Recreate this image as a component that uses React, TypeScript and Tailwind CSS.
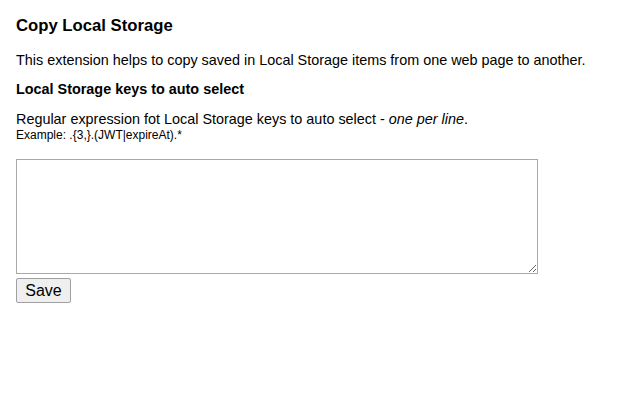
export default function App() {
  return (
    <div className="min-h-[400px] bg-white px-4 pt-[15px] text-black font-['Liberation_Sans',Arial,sans-serif]">
      {/* Header */}
      <h3 className="text-[16.7px] font-bold leading-[22px]">Copy Local Storage</h3>
      <p className="mt-[14px] text-[14.4px] leading-[18px]">
        This extension helps to copy saved in Local Storage items from one web page to another.
      </p>

      {/* Settings */}
      <h4 className="mt-[11px] text-[14.4px] font-bold leading-[18px]">Local Storage keys to auto select</h4>
      <p className="mt-[12px] text-[14.4px] leading-[18px]">
        Regular expression fot Local Storage keys to auto select - <em>one per line</em>.
      </p>
      <p className="text-[12px] leading-[14px]">Example: .{'{3,}'}.(JWT|expireAt).*</p>

      <div className="mt-[17px] flex flex-col items-start gap-[4px]">
        <textarea className="block h-[115px] w-[522px] resize border border-[#a9a9a9] bg-white p-[2px] text-[13px]" />
        <button className="h-[25px] w-[55px] rounded-[2px] border border-[#a0a0a0] bg-[#efefef] text-[16px] leading-[18px] text-black">
          Save
        </button>
      </div>
    </div>
  );
}
